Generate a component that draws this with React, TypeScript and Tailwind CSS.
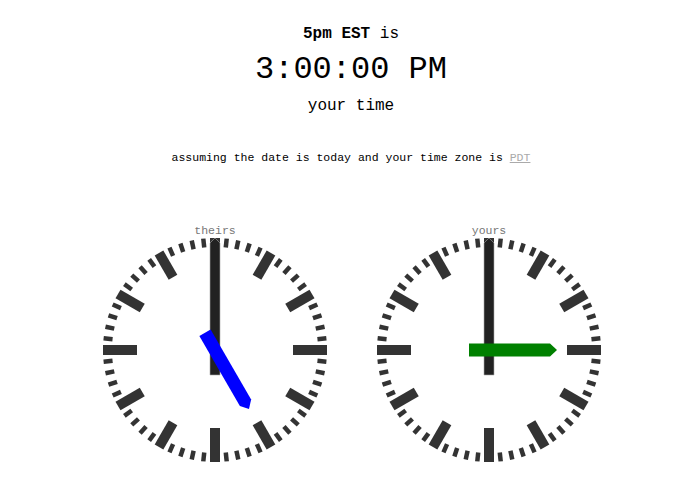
import React from "react";

interface ClockProps {
  label: string;
  hourAngle: number; // degrees from 12
  minuteAngle: number;
  handColor: string;
}

const Clock: React.FC<ClockProps> = ({ label, hourAngle, minuteAngle, handColor }) => {
  const ticks = Array.from({ length: 60 }, (_, i) => i);

  return (
    <div className="flex flex-col items-center">
      <div className="text-[11.5px] leading-[12px] text-[#777]">{label}</div>
      <svg width="230" height="230" viewBox="-115 -115 230 230" className="-mt-[2px]">
        {ticks.map((i) => {
          const isHour = i % 5 === 0;
          const isCardinal = i % 15 === 0;
          const inner = isCardinal ? -78 : isHour ? -84 : -103;
          return (
            <line
              key={i}
              x1={0}
              y1={-112}
              x2={0}
              y2={inner}
              stroke="#333"
              strokeWidth={isHour ? 10 : 4.5}
              transform={`rotate(${i * 6})`}
            />
          );
        })}
        {/* minute hand */}
        <polygon
          points="-5,25 5,25 5,-107 0,-112 -5,-107"
          fill="#222"
          stroke="#aaa"
          strokeWidth={0.6}
          transform={`rotate(${minuteAngle})`}
        />
        {/* hour hand */}
        <polygon
          points="-6.5,20 6.5,20 6.5,-61 0,-68 -6.5,-61"
          fill={handColor}
          transform={`rotate(${hourAngle})`}
        />
      </svg>
    </div>
  );
};

export default function App() {
  return (
    <div className="min-h-screen bg-white text-black font-['Liberation_Mono',monospace]">
      <div className="flex flex-col items-center pt-[24px] pl-[3px]">
        <div className="text-[16px] leading-[20px]">
          <b>5pm EST</b> is
        </div>
        <div className="mt-[6px] text-[32px] leading-[40px]">3:00:00 PM</div>
        <div className="mt-[6px] text-[16px] leading-[20px]">your time</div>
        <div className="mt-[35px] text-[11.5px] leading-[14px]">
          assuming the date is today and your time zone is{" "}
          <a href="#" className="text-[#aaa] underline">
            PDT
          </a>
        </div>
        <div className="mt-[60px] flex gap-[44px] pl-[2px]">
          <Clock label="theirs" hourAngle={150} minuteAngle={0} handColor="#0000ff" />
          <Clock label="yours" hourAngle={90} minuteAngle={0} handColor="#008000" />
        </div>
      </div>
    </div>
  );
}
